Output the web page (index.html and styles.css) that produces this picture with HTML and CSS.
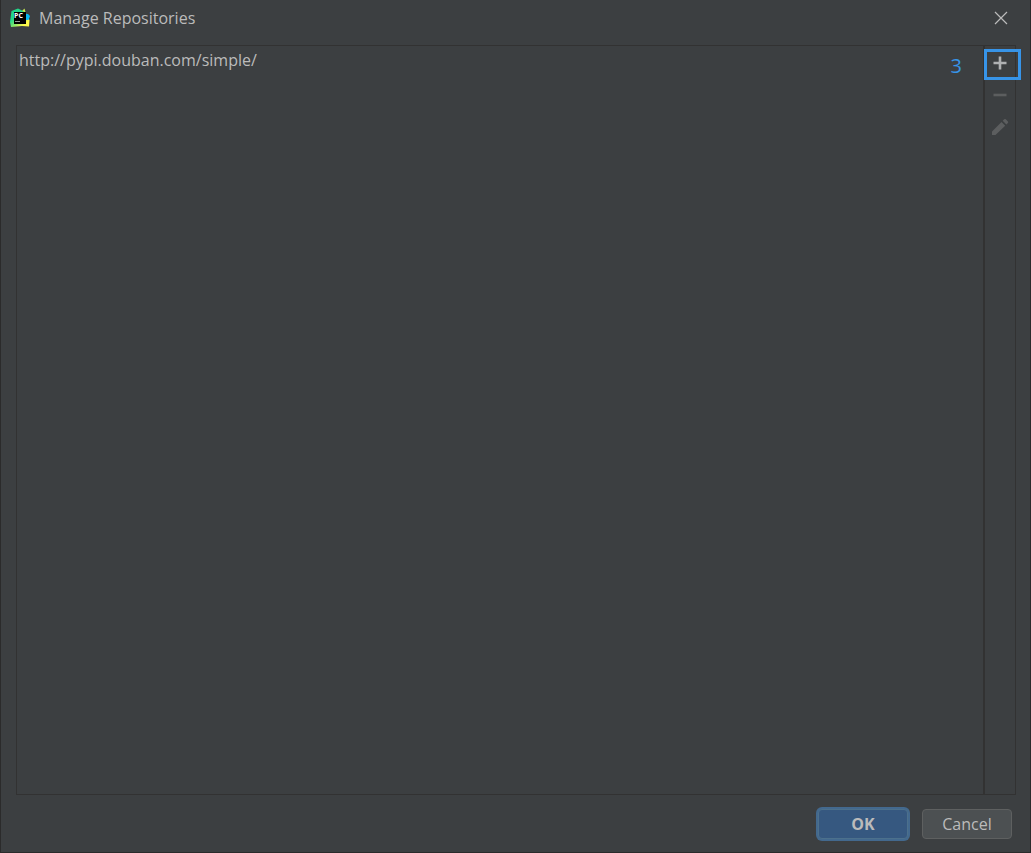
FILE: index.html
```html
<!DOCTYPE html>
<html lang="en">
<head>
    <meta charset="UTF-8">
    <meta name="viewport" content="width=device-width, initial-scale=1.0">
    <title>Manage Repositories</title>
    <link rel="stylesheet" href="styles.css">
</head>
<body>
    <div class="dialog">
        <header class="titlebar">
            <svg class="logo" viewBox="0 0 20 20" aria-hidden="true">
                <defs>
                    <linearGradient id="logoGreen" x1="0" y1="0" x2="1" y2="1">
                        <stop offset="0.35" stop-color="#21d789"/>
                        <stop offset="0.8" stop-color="#fcf84a"/>
                    </linearGradient>
                </defs>
                <path d="M12 3 14.5 0.5 15.5 4 16 6 11 6Z" fill="#c9ee50"/>
                <path d="M1.5 3 8 0.5 12 2.5 16 5 18 10 19.5 12 19 18.5 12 18 1 19 0 14Z" fill="url(#logoGreen)"/>
                <path d="M15 6 18 6 20 8 18.5 12 15 12Z" fill="#07b8f2"/>
                <rect x="4" y="4" width="12" height="12" fill="#000"/>
                <text class="logo-text" x="4" y="10">PC</text>
                <rect x="5" y="13" width="5" height="1" fill="#999"/>
            </svg>
            <h1>Manage Repositories</h1>
            <button class="close" type="button" aria-label="Close">
                <svg width="14" height="14" viewBox="0 0 14 14">
                    <path d="M1 1 13 13M13 1 1 13" fill="none" stroke="#bbb" stroke-width="1.2"/>
                </svg>
            </button>
        </header>

        <main class="panel">
            <ul class="repo-list">
                <li>http://pypi.douban.com/simple/</li>
            </ul>
            <div class="toolbar">
                <button class="tool" type="button" aria-label="Add">
                    <svg width="14" height="14" viewBox="0 0 14 14">
                        <path d="M7 0.5V13.5M0.5 7H13.5" fill="none" stroke="#afb1b3" stroke-width="2.6"/>
                    </svg>
                </button>
                <button class="tool" type="button" aria-label="Remove" disabled>
                    <svg width="14" height="14" viewBox="0 0 14 14">
                        <path d="M0.5 7H13.5" fill="none" stroke="#5c5e5f" stroke-width="2.6"/>
                    </svg>
                </button>
                <button class="tool" type="button" aria-label="Edit" disabled>
                    <svg width="18" height="18" viewBox="0 0 18 18">
                        <path d="M10.5 4 14.2 7.7 5 16.5Q4.5 17 4 17H1V14Q1 13.5 1.5 13ZM11.7 2.8 13.2 1.3Q14 0.6 14.8 1.3L16.9 3.4Q17.6 4.2 16.9 5L15.4 6.5Z" fill="#5c5e5f"/>
                    </svg>
                </button>
                <span class="step">3</span>
                <span class="highlight"></span>
            </div>
        </main>

        <footer class="actions">
            <button class="btn btn-default" type="button">OK</button>
            <button class="btn" type="button">Cancel</button>
        </footer>
    </div>
</body>
</html>
```
FILE: styles.css
```css
* {
    box-sizing: border-box;
}
body {
    margin: 0;
    background: #3c3f41;
    color: #bbbbbb;
    font-family: "Open Sans", "Noto Sans", sans-serif;
    font-size: 16px;
    line-height: 24px;
}
button {
    padding: 0;
    border: none;
    background: none;
    color: inherit;
    font: inherit;
}
svg {
    display: block;
}
.dialog {
    display: flex;
    flex-direction: column;
    min-height: 100vh;
    border: 1px solid #2b2b2b;
    border-top: none;
}
.titlebar {
    display: flex;
    align-items: center;
    height: 36px;
    padding: 0 22px 0 9px;
}
.logo {
    width: 20px;
    height: 20px;
    margin-right: 9px;
}
.logo-text {
    fill: #fff;
    font-size: 7px;
    font-weight: bold;
}
h1 {
    flex: 1;
    margin: 0;
    font-size: 16px;
    font-weight: normal;
}
.panel {
    display: flex;
    flex: 1;
    margin: 9px 14px 0 15px;
    border: 1px solid #323232;
}
.repo-list {
    flex: 1;
    margin: 0;
    padding: 2px;
    border-right: 1px solid #323232;
    list-style: none;
}
.toolbar {
    position: relative;
    display: flex;
    flex-direction: column;
    width: 31px;
    padding-top: 1px;
    border-left: 1px solid #323232;
}
.tool {
    display: flex;
    align-items: center;
    justify-content: center;
    height: 32px;
}
/* callout drawn over the Add button */
.highlight {
    position: absolute;
    top: 3px;
    left: -1px;
    width: 37px;
    height: 31px;
    border: 3px solid #3794e8;
    pointer-events: none;
}
.step {
    position: absolute;
    top: 8px;
    right: 53px;
    color: #3794e8;
    font-size: 20px;
}
.actions {
    display: flex;
    align-items: center;
    justify-content: flex-end;
    gap: 14px;
    height: 57px;
    padding-right: 18px;
}
.btn {
    width: 90px;
    height: 30px;
    border: 1px solid #5e6060;
    border-radius: 4px;
    background: #4c5052;
}
.btn-default {
    border-color: #4c708c;
    background: #365880;
    box-shadow: 0 0 0 2px #43698e;
    font-weight: bold;
}
```
